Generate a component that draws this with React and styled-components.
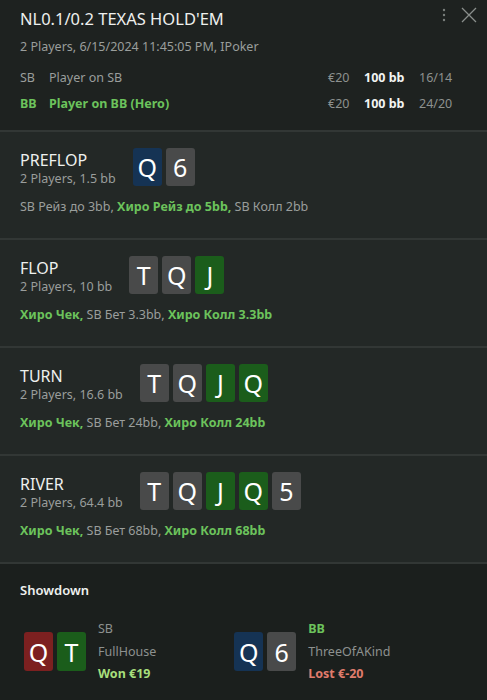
import styled, { createGlobalStyle } from "styled-components";

const GlobalStyle = createGlobalStyle`
  body {
    margin: 0;
    background: #1e2220;
    font-family: "Noto Sans", "Open Sans", sans-serif;
  }
`;

const CARD_COLORS = {
  blue: "#153354",
  gray: "#494a4a",
  green: "#1b5d1b",
  red: "#7c2020"
};

const streets = [
  {
    name: "PREFLOP",
    info: "2 Players, 1.5 bb",
    cards: [["Q", "blue"], ["6", "gray"]],
    actions: [
      ["SB Рейз до 3bb, ", false],
      ["Хиро Рейз до 5bb, ", true],
      ["SB Колл 2bb", false]
    ]
  },
  {
    name: "FLOP",
    info: "2 Players, 10 bb",
    cards: [["T", "gray"], ["Q", "gray"], ["J", "green"]],
    actions: [
      ["Хиро Чек, ", true],
      ["SB Бет 3.3bb, ", false],
      ["Хиро Колл 3.3bb", true]
    ]
  },
  {
    name: "TURN",
    info: "2 Players, 16.6 bb",
    cards: [["T", "gray"], ["Q", "gray"], ["J", "green"], ["Q", "green"]],
    actions: [
      ["Хиро Чек, ", true],
      ["SB Бет 24bb, ", false],
      ["Хиро Колл 24bb", true]
    ]
  },
  {
    name: "RIVER",
    info: "2 Players, 64.4 bb",
    cards: [["T", "gray"], ["Q", "gray"], ["J", "green"], ["Q", "green"], ["5", "gray"]],
    actions: [
      ["Хиро Чек, ", true],
      ["SB Бет 68bb, ", false],
      ["Хиро Колл 68bb", true]
    ]
  }
];

const App = () => {
  return (
    <Panel>
      <GlobalStyle />
      <Header>
        <TopIcons>
          <svg width="4" height="14" viewBox="0 0 4 14">
            <circle cx="2" cy="2" r="1.2" fill="#7a7f7c" />
            <circle cx="2" cy="7" r="1.2" fill="#7a7f7c" />
            <circle cx="2" cy="12" r="1.2" fill="#7a7f7c" />
          </svg>
          <svg width="16" height="16" viewBox="0 0 16 16">
            <path d="M1 1 L15 15 M15 1 L1 15" stroke="#8a8f8c" strokeWidth="1.3" />
          </svg>
        </TopIcons>
        <Title>NL0.1/0.2 TEXAS HOLD'EM</Title>
        <Sub>2 Players, 6/15/2024 11:45:05 PM, IPoker</Sub>
        <Players>
          <PlayerRow>
            <span>SB</span>
            <span>Player on SB</span>
            <Money>€20</Money>
            <Stack>100 bb</Stack>
            <Money>16/14</Money>
          </PlayerRow>
          <PlayerRow $hero>
            <span>BB</span>
            <span>Player on BB (Hero)</span>
            <Money>€20</Money>
            <Stack>100 bb</Stack>
            <Money>24/20</Money>
          </PlayerRow>
        </Players>
      </Header>

      {streets.map((s) => (
        <Street key={s.name}>
          <StreetTop>
            <StreetLabel>
              <div className="name">{s.name}</div>
              <div className="info">{s.info}</div>
            </StreetLabel>
            <Cards>
              {s.cards.map(([r, c], i) => (
                <Card key={i} $color={c}>{r}</Card>
              ))}
            </Cards>
          </StreetTop>
          <Actions>
            {s.actions.map(([t, hero], i) => (
              <Act key={i} $hero={hero}>{t}</Act>
            ))}
          </Actions>
        </Street>
      ))}

      <Showdown>
        <ShowTitle>Showdown</ShowTitle>
        <ShowRow>
          <Hand>
            <Cards>
              <Card $color="red" $tall>Q</Card>
              <Card $color="green" $tall>T</Card>
            </Cards>
            <HandInfo>
              <div>SB</div>
              <div>FullHouse</div>
              <Result $won>Won €19</Result>
            </HandInfo>
          </Hand>
          <Hand>
            <Cards>
              <Card $color="blue" $tall>Q</Card>
              <Card $color="gray" $tall>6</Card>
            </Cards>
            <HandInfo>
              <HeroPos>BB</HeroPos>
              <div>ThreeOfAKind</div>
              <Result>Lost €-20</Result>
            </HandInfo>
          </Hand>
        </ShowRow>
      </Showdown>
    </Panel>
  );
};

export default App;

const Panel = styled.div`
  width: 487px;
  height: 700px;
  overflow: hidden;
  background: #1e2220;
  color: #e6e8e6;
`;

const Header = styled.div`
  position: relative;
  padding: 8px 20px 0 20px;
  height: 122px;
  border-bottom: 2px solid #323735;
`;

const TopIcons = styled.div`
  position: absolute;
  top: 7px;
  right: 10px;
  display: flex;
  align-items: center;
  gap: 15px;
`;

const Title = styled.div`
  font-size: 16.5px;
  color: #eef0ee;
  line-height: 22px;
`;

const Sub = styled.div`
  margin-top: 8px;
  font-size: 12.5px;
  color: #9a9e9c;
`;

const Players = styled.div`
  margin-top: 14px;
  display: flex;
  flex-direction: column;
  gap: 9px;
`;

const PlayerRow = styled.div`
  display: grid;
  grid-template-columns: 29px 1fr 36px 55px 48px;
  font-size: 12.5px;
  line-height: 17px;
  color: ${(p) => (p.$hero ? "#6cc35c" : "#9a9e9c")};
  font-weight: ${(p) => (p.$hero ? 700 : 400)};
`;

const Money = styled.span`
  color: #8d918f;
  font-weight: 400;
`;

const Stack = styled.span`
  color: #f2f4f2;
  font-weight: 700;
`;

const Street = styled.div`
  background: #232826;
  height: 108px;
  box-sizing: border-box;
  padding: 16px 20px 0 20px;
  border-bottom: 2px solid #323735;
`;

const StreetTop = styled.div`
  display: flex;
  align-items: flex-start;
  gap: 17px;
`;

const StreetLabel = styled.div`
  padding-top: 2px;
  .name {
    font-size: 16px;
    line-height: 20px;
    color: #eef0ee;
  }
  .info {
    font-size: 12.5px;
    line-height: 17px;
    color: #9a9e9c;
  }
`;

const Cards = styled.div`
  display: flex;
  gap: 4px;
`;

const Card = styled.div`
  width: 29px;
  height: ${(p) => (p.$tall ? 39 : 38)}px;
  border-radius: 3px;
  background: ${(p) => CARD_COLORS[p.$color]};
  color: #fff;
  font-size: 25px;
  display: flex;
  align-items: center;
  justify-content: center;
`;

const Actions = styled.div`
  margin-top: 11px;
  font-size: 12.5px;
  line-height: 17px;
`;

const Act = styled.span`
  color: ${(p) => (p.$hero ? "#6cc35c" : "#9a9e9c")};
  font-weight: ${(p) => (p.$hero ? 700 : 400)};
`;

const Showdown = styled.div`
  background: #1b1f1d;
  height: 200px;
  padding: 17px 20px 0 20px;
`;

const ShowTitle = styled.div`
  font-size: 13px;
  font-weight: 600;
  color: #eef0ee;
`;

const ShowRow = styled.div`
  margin-top: 19px;
  padding-left: 4px;
  display: flex;
  gap: 78px;
`;

const Hand = styled.div`
  display: flex;
  align-items: center;
  gap: 12px;
`;

const HandInfo = styled.div`
  font-size: 12.5px;
  line-height: 22.5px;
  color: #8d918f;
`;

const HeroPos = styled.div`
  color: #6cc35c;
  font-weight: 700;
`;

const Result = styled.div`
  font-weight: 700;
  color: ${(p) => (p.$won ? "#a7df7c" : "#e07c6c")};
`;
